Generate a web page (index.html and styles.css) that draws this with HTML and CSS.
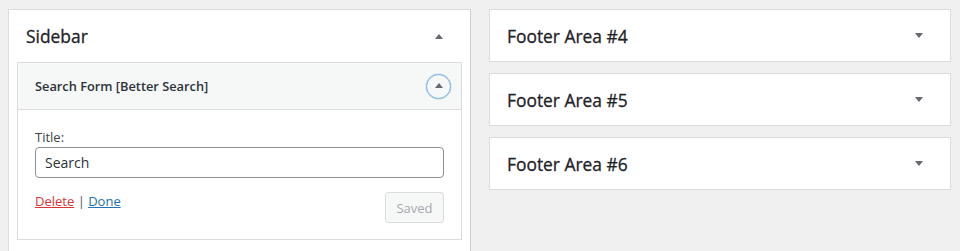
FILE: index.html
```html
<!DOCTYPE html>
<html lang="en">
<head>
    <meta charset="UTF-8">
    <meta name="viewport" content="width=device-width, initial-scale=1.0">
    <title>Widgets</title>
    <link rel="stylesheet" href="styles.css">
</head>
<body>
    <div class="widgets">
        <div class="sidebar">
            <div class="area-head">
                <h2>Sidebar</h2>
                <span class="arrow up"></span>
            </div>
            <div class="widget">
                <div class="widget-top">
                    <h3>Search Form [Better Search]</h3>
                    <button class="toggle"><span class="arrow up"></span></button>
                </div>
                <div class="widget-inside">
                    <label for="title">Title:</label>
                    <input id="title" type="text" value="Search">
                    <div class="widget-actions">
                        <div class="links">
                            <a href="#" class="delete">Delete</a> | <a href="#" class="done">Done</a>
                        </div>
                        <button class="saved" disabled>Saved</button>
                    </div>
                </div>
            </div>
        </div>

        <div class="column">
            <div class="area-head closed">
                <h2>Footer Area #4</h2>
                <span class="arrow down"></span>
            </div>
            <div class="area-head closed">
                <h2>Footer Area #5</h2>
                <span class="arrow down"></span>
            </div>
            <div class="area-head closed">
                <h2>Footer Area #6</h2>
                <span class="arrow down"></span>
            </div>
        </div>
    </div>
</body>
</html>
```

FILE: styles.css
```css
body {
    margin: 0;
    padding: 9px 9px 0 8px;
    background: #f0f0f1;
    font-family: "Open Sans", "Noto Sans", sans-serif;
    color: #1d2327;
    height: 251px;
    box-sizing: border-box;
    overflow: hidden;
}
.widgets {
    display: flex;
    gap: 18px;
    align-items: flex-start;
}
.sidebar {
    width: 463px;
    height: 260px;
    box-sizing: border-box;
    background: #fff;
    border: 1px solid #dcdcde;
    border-right-color: #d0d0d2;
}
.column {
    flex: 1;
    display: flex;
    flex-direction: column;
    gap: 11px;
}
.area-head {
    display: flex;
    align-items: center;
    justify-content: space-between;
    height: 52px;
    box-sizing: border-box;
    padding: 0 27px 0 17px;
}
.area-head.closed {
    background: #fff;
    border: 1px solid #dcdcde;
    height: 53px;
}
.area-head h2 {
    margin: 0;
    font-size: 17.4px;
    font-weight: 400;
    color: #1d2327;
    -webkit-text-stroke: 0.3px #1d2327;
}
.arrow {
    width: 0;
    height: 0;
    border-left: 4px solid transparent;
    border-right: 4px solid transparent;
}
.arrow.up {
    border-bottom: 5px solid #646970;
}
.arrow.down {
    border-top: 5px solid #646970;
}
.widget {
    margin: 0 8px;
    border: 1px solid #dcdcde;
}
.widget-top {
    display: flex;
    align-items: center;
    justify-content: space-between;
    height: 46px;
    padding: 0 10px 0 17px;
    background: #f6f7f7;
    border-bottom: 1px solid #dcdcde;
}
.widget-top h3 {
    margin: 0;
    font-size: 12.8px;
    font-weight: 600;
    color: #2c3338;
}
.toggle {
    width: 25px;
    height: 25px;
    padding: 0;
    border: 1.5px solid #72aee6;
    border-radius: 50%;
    background: transparent;
    display: flex;
    align-items: center;
    justify-content: center;
    box-shadow: 0 0 1px #4f94d4;
}
.toggle .arrow.up {
    margin-top: -1px;
}
.widget-inside {
    padding: 18px 17px 16px 17px;
    font-size: 13px;
}
.widget-inside label {
    display: block;
    color: #3c434a;
    line-height: 18px;
    margin-bottom: 1px;
}
.widget-inside input {
    display: block;
    width: 100%;
    box-sizing: border-box;
    height: 31px;
    padding: 0 9px;
    border: 1px solid #8c8f94;
    border-radius: 4px;
    font-family: inherit;
    font-size: 14px;
    color: #2c3338;
}
.widget-actions {
    display: flex;
    justify-content: space-between;
    align-items: flex-start;
    margin-top: 14px;
    color: #50575e;
}
.links {
    line-height: 20px;
    margin-top: -1px;
}
.delete {
    color: #d63638;
}
.done {
    color: #2271b1;
}
.saved {
    width: 59px;
    height: 31px;
    border: 1px solid #dcdcde;
    border-radius: 3px;
    background: #f6f7f7;
    color: #a7aaad;
    font-family: inherit;
    font-size: 13px;
}
```
